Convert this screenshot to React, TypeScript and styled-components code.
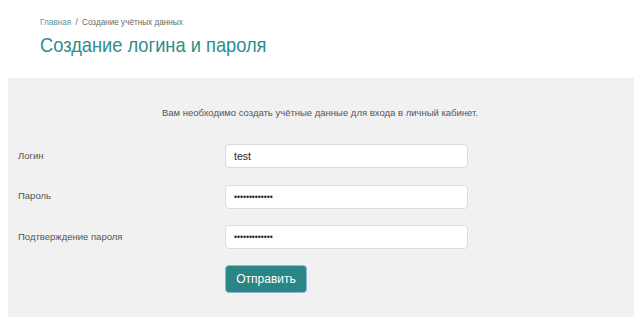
import styled, { createGlobalStyle } from 'styled-components';

const GlobalStyle = createGlobalStyle`
  html, body {
    margin: 0;
    padding: 0;
    background: #fff;
    font-family: 'Liberation Sans', Arial, sans-serif;
  }
`;

const Page = styled.div`
  width: 634px;
  height: 317px;
  overflow: hidden;
  display: flex;
  flex-direction: column;
`;

const Header = styled.div`
  padding: 16px 0 0 40px;
  height: 78px;
  box-sizing: border-box;
`;

// the source font is narrower than Arial, squeeze it a bit
const Breadcrumbs = styled.div`
  font-size: 9.5px;
  color: #777;
  display: flex;
  gap: 5px;
  line-height: 12px;
  transform: scaleX(0.86);
  transform-origin: left center;
`;

const Crumb = styled.span<{ $link?: boolean }>`
  color: ${(p) => (p.$link ? '#5f9696' : '#6a6a6a')};
`;

const Title = styled.h1`
  margin: 4px 0 0;
  font-size: 21px;
  font-weight: normal;
  color: #2f8c8c;
  line-height: 26px;
  white-space: nowrap;
  transform: scaleX(0.87);
  transform-origin: left center;
`;

const Panel = styled.div`
  flex: 1;
  margin-left: 8px;
  background: #f1f1f1;
  padding: 29px 0 0 10px;
`;

const Intro = styled.p`
  margin: 0 0 25px;
  text-align: center;
  font-size: 9.5px;
  color: #555;
  line-height: 12px;
  padding-right: 12px;
`;

const Row = styled.div`
  display: grid;
  grid-template-columns: 207px 243px;
  align-items: center;
  height: 24px;
  margin-bottom: 16.5px;
`;

const Label = styled.label`
  font-size: 9.5px;
  color: #555;
  margin-top: -2px;
`;

const Input = styled.input`
  box-sizing: border-box;
  width: 243px;
  height: 24px;
  border: 1px solid #dcdcdc;
  border-radius: 4px;
  background: #fff;
  padding: 0 8px;
  font-family: 'Liberation Sans', Arial, sans-serif;
  font-size: ${(p) => (p.type === 'password' ? '8.5px' : '10.5px')};
  color: #222;
  outline: none;
`;

const Actions = styled.div`
  padding-left: 207px;
  margin-top: -0.5px;
`;

const Button = styled.button`
  width: 82px;
  height: 28px;
  border: 1px solid #8db7d6;
  border-radius: 4px;
  background: #2a8585;
  color: #fff;
  font-family: 'Liberation Sans', Arial, sans-serif;
  font-size: 12px;
  padding: 0;
  cursor: pointer;
`;

export default function App() {
  return (
    <Page>
      <GlobalStyle />
      <Header>
        <Breadcrumbs>
          <Crumb $link>Главная</Crumb>
          <Crumb>/</Crumb>
          <Crumb>Создание учётных данных</Crumb>
        </Breadcrumbs>
        <Title>Создание логина и пароля</Title>
      </Header>
      <Panel>
        <Intro>Вам необходимо создать учётные данные для входа в личный кабинет.</Intro>
        <Row>
          <Label>Логин</Label>
          <Input type="text" defaultValue="test" />
        </Row>
        <Row>
          <Label>Пароль</Label>
          <Input type="password" defaultValue="testtesttest1" />
        </Row>
        <Row>
          <Label>Подтверждение пароля</Label>
          <Input type="password" defaultValue="testtesttest1" />
        </Row>
        <Actions>
          <Button type="button">Отправить</Button>
        </Actions>
      </Panel>
    </Page>
  );
}
